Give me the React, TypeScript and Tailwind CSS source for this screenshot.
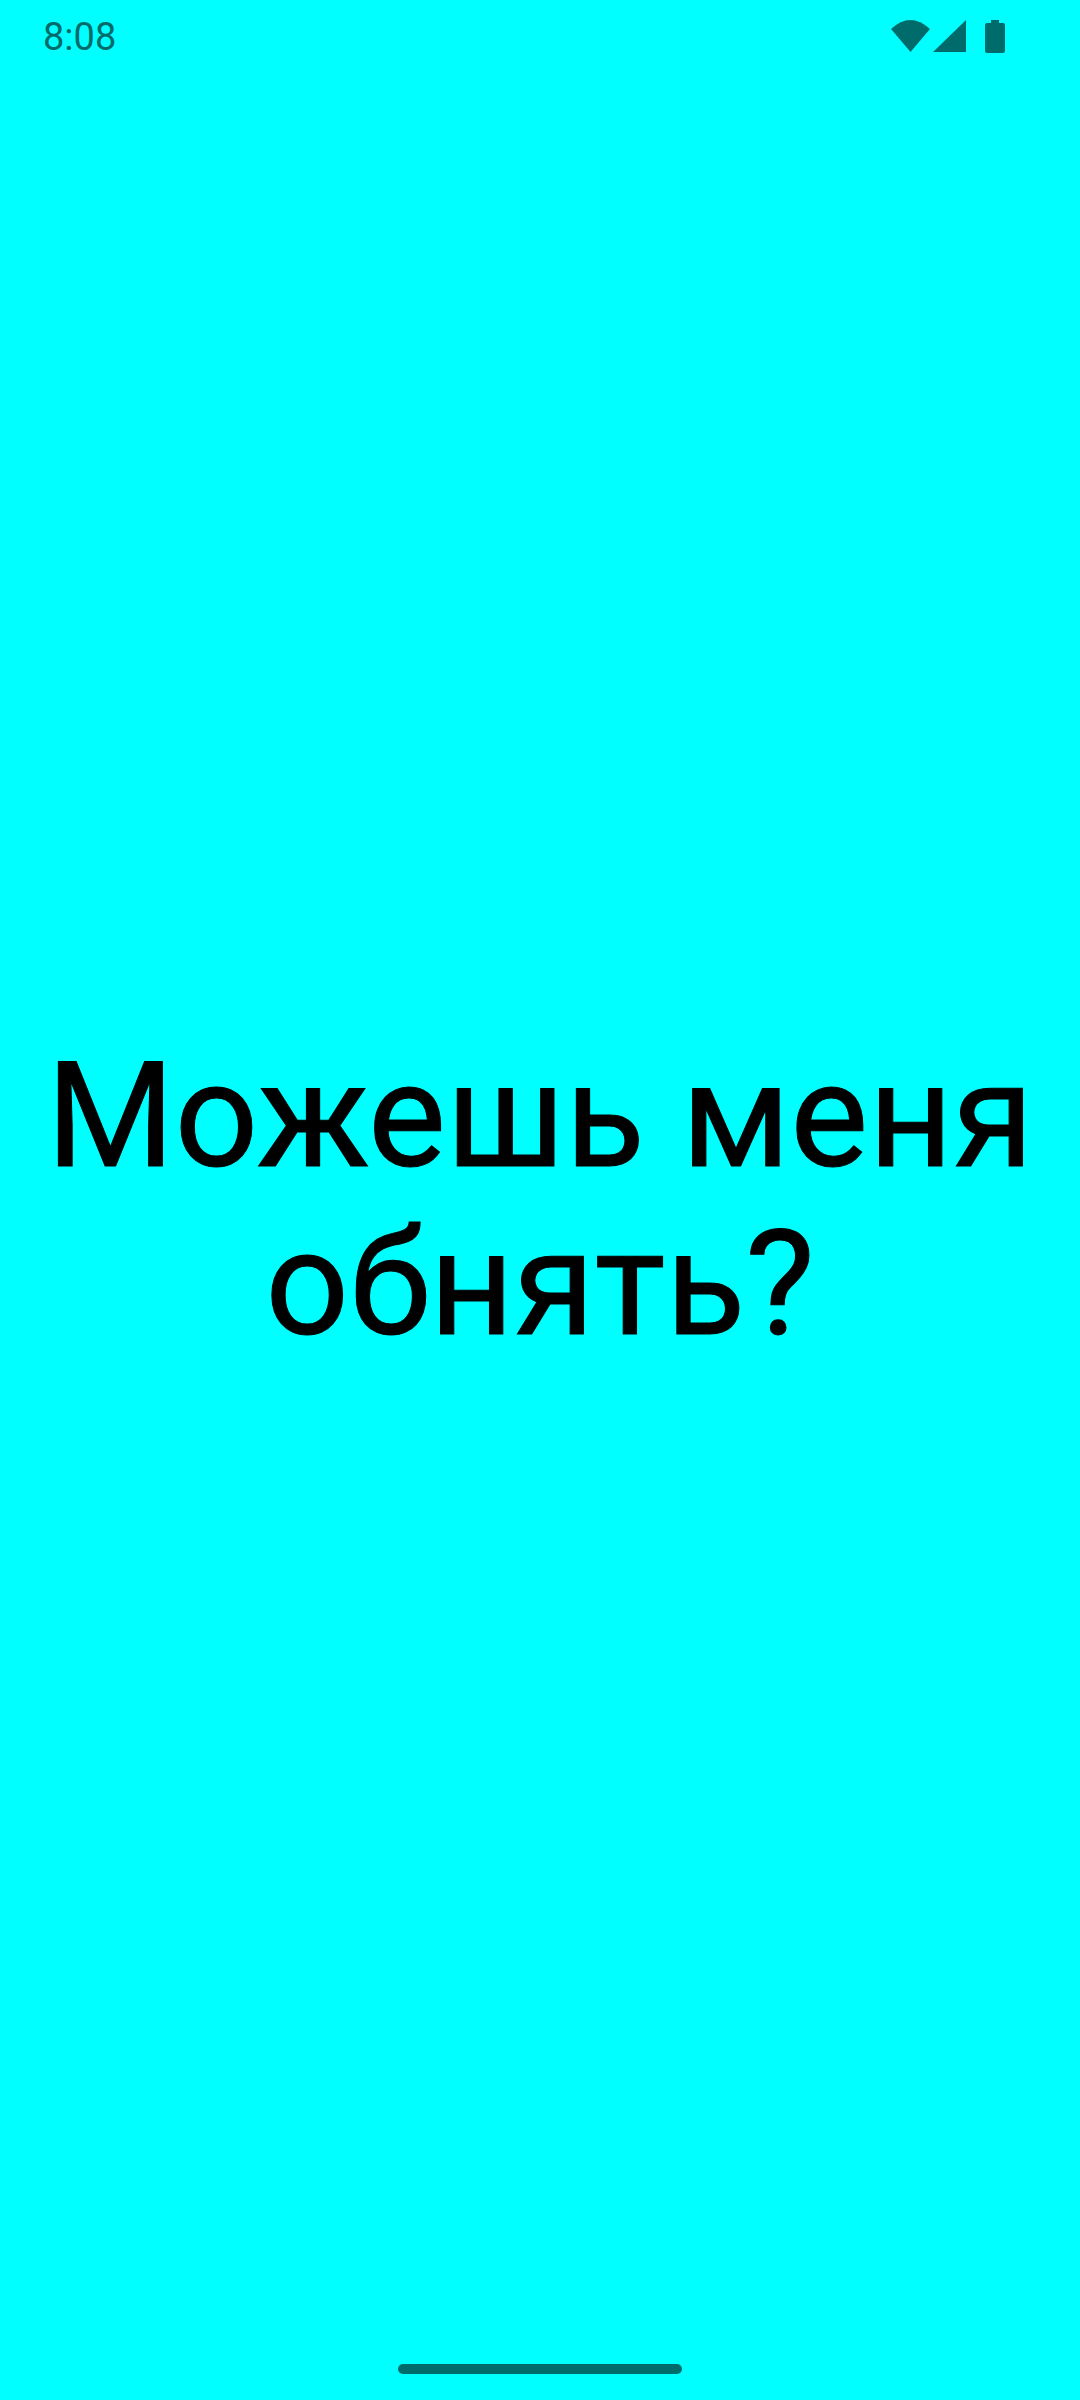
import React from 'react';

const App: React.FC = () => {
  return (
    <div className="w-[1080px] h-[2400px] bg-[#00ffff] flex flex-col font-['Roboto',sans-serif] overflow-hidden">
      {/* status bar */}
      <div className="h-[72px] flex items-center justify-between pl-[43px] pr-[75px] shrink-0">
        <span className="text-[38px] leading-[72px] pt-[2px] text-[#006b6b]">8:08</span>
        <div className="flex items-center gap-[3px] text-[#006b6b]">
          <svg width="39" height="34" viewBox="0 0 39 34">
            <path d="M0 10 Q19.5 -8 39 10 L19.5 33 Z" fill="currentColor" />
          </svg>
          <svg width="33" height="34" viewBox="0 0 33 34">
            <path d="M33 1 V33 H0 Z" fill="currentColor" />
          </svg>
          <svg width="20" height="34" viewBox="0 0 20 34" className="ml-[16px]">
            <path d="M6 1 H14 V4 H18 Q20 4 20 6 V32 Q20 34 18 34 H2 Q0 34 0 32 V6 Q0 4 2 4 H6 Z" fill="currentColor" />
          </svg>
        </div>
      </div>

      {/* message */}
      <div className="flex-1 flex items-center justify-center pb-[26px]">
        <p className="w-[1040px] text-center text-[147px] leading-[168px] text-black [-webkit-text-stroke:1px_black]">Можешь меня обнять?</p>
      </div>

      {/* gesture bar */}
      <div className="h-[46px] flex justify-center pt-[10px] shrink-0">
        <div className="w-[284px] h-[10px] rounded-full bg-[#006b6b]" />
      </div>
    </div>
  );
};

export default App;
